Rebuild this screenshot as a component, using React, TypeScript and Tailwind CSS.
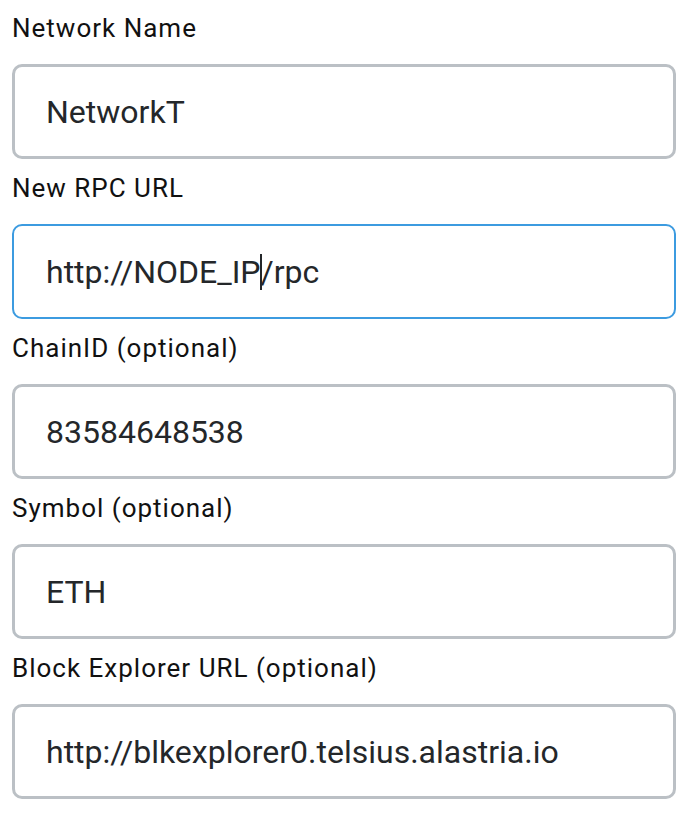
import React from "react";

const fields = [
  { label: "Network Name", value: "NetworkT" },
  { label: "New RPC URL", value: "http://NODE_IP/rpc", focused: true },
  { label: "ChainID (optional)", value: "83584648538" },
  { label: "Symbol (optional)", value: "ETH" },
  { label: "Block Explorer URL (optional)", value: "http://blkexplorer0.telsius.alastria.io" },
];

export default function App() {
  return (
    <div
      className="w-[690px] h-[814px] bg-white pl-3 pt-[13px]"
      style={{ fontFamily: "Roboto, 'Liberation Sans', sans-serif" }}
    >
      {fields.map((f, i) => (
        <div key={i} className={i === 0 ? "" : "mt-[14px]"}>
          <div className="text-[26px] leading-[30px] tracking-[1px] text-[#111]">{f.label}</div>
          {f.focused ? (
            <div className="mt-[21px] w-[664px] h-[95px] rounded-[10px] border-2 border-[#3c9be0] flex items-center pl-[32px] text-[32px] text-[#24272a]">
              <span>http://NODE_IP</span>
              <span className="inline-block w-[2px] h-[36px] bg-[#24272a] -mx-[1px]" />
              <span>/rpc</span>
            </div>
          ) : (
            <div className="mt-[21px] w-[664px] h-[95px] rounded-[10px] border-[3px] border-[#bbc0c5] flex items-center pl-[31px] text-[32px] text-[#24272a] whitespace-nowrap">
              {f.value}
            </div>
          )}
        </div>
      ))}
    </div>
  );
}
